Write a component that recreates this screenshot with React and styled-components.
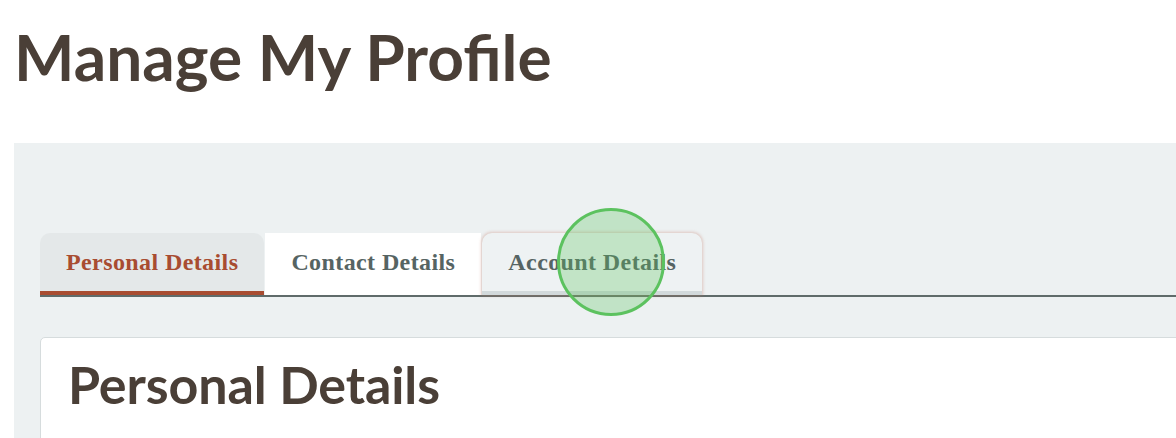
import styled, { createGlobalStyle } from "styled-components";

const tabs = [
  { id: "personal", label: "Personal Details" },
  { id: "contact", label: "Contact Details" },
  { id: "account", label: "Account Details" },
];

function App() {
  const active = "personal";
  const hovered = "account";

  return (
    <>
      <GlobalStyle />
      <Page>
        <Title>Manage My Profile</Title>
        <Panel>
          <TabList>
            {tabs.map((tab) => (
              <Tab
                key={tab.id}
                $active={tab.id === active}
                $hovered={tab.id === hovered}
                $plain={tab.id === "contact"}
              >
                {tab.label}
              </Tab>
            ))}
            <ClickMarker />
          </TabList>
          <Card>
            <CardTitle>Personal Details</CardTitle>
          </Card>
        </Panel>
      </Page>
    </>
  );
}

const GlobalStyle = createGlobalStyle`
  body {
    margin: 0;
    overflow: hidden;
    background: #ffffff;
    font-family: Lato, "Liberation Sans", sans-serif;
  }
`;

const Page = styled.div`
  width: 1260px;
  padding-top: 17px;
`;

const Title = styled.h1`
  margin: 0 0 0 14px;
  font-family: Lato, sans-serif;
  font-weight: 700;
  font-size: 64px;
  line-height: 80px;
  color: #4a3f37;
`;

const Panel = styled.section`
  margin: 46px 0 0 14px;
  padding: 90px 0 0 26px;
  background: #edf1f2;
`;

const TabList = styled.div`
  position: relative;
  display: flex;
  align-items: flex-end;
  gap: 1px;
  border-bottom: 2px solid #5f6b6a;
`;

const Tab = styled.button`
  box-sizing: border-box;
  height: 62px;
  padding: 0 26px;
  border: none;
  border-radius: ${({ $plain }) => ($plain ? "0" : "10px 10px 0 0")};
  border-bottom: 4px solid
    ${({ $active, $hovered, $plain }) =>
      $active ? "#a84c31" : $hovered ? "#d2d9db" : $plain ? "#ffffff" : "transparent"};
  background: ${({ $active, $plain }) =>
    $active ? "#e4e8e9" : $plain ? "#ffffff" : "#eef2f3"};
  box-shadow: ${({ $hovered }) =>
    $hovered ? "0 0 3px 1px rgba(196, 120, 100, 0.35)" : "none"};
  font-family: "Liberation Serif", serif;
  font-weight: 700;
  font-size: 24px;
  letter-spacing: 0.4px;
  color: ${({ $active }) => ($active ? "#a84c31" : "#566463")};
  cursor: pointer;
`;

const ClickMarker = styled.span`
  position: absolute;
  left: 517px;
  top: -25px;
  width: 102px;
  height: 102px;
  border: 3px solid #5cc25f;
  border-radius: 50%;
  background: rgba(92, 194, 95, 0.3);
  pointer-events: none;
`;

const Card = styled.div`
  margin-top: 40px;
  padding: 14px 27px 20px;
  height: 120px;
  background: #ffffff;
  border: 1px solid #d6dcdd;
  border-radius: 5px 0 0 0;
`;

const CardTitle = styled.h2`
  margin: 0;
  font-family: Lato, sans-serif;
  font-weight: 700;
  font-size: 52px;
  line-height: 64px;
  letter-spacing: -0.1px;
  color: #4a3f37;
`;

export default App;
